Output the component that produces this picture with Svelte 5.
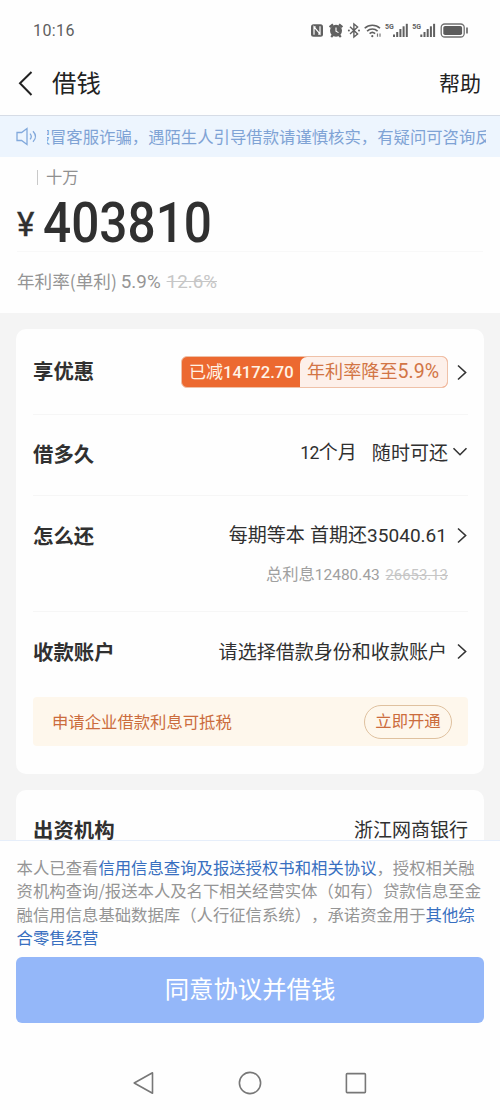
<script lang="ts">
  const amount = "403810";
  const notice = "冒客服诈骗，遇陌生人引导借款请谨慎核实，有疑问可咨询反";
  const signals = [85, 112.3];
</script>

{#snippet arrow()}
  <svg class="arrow" width="12" height="18" viewBox="0 0 12 18">
    <path d="M2 2.5 9.6 9.5l-7.6 7" />
  </svg>
{/snippet}

<div class="screen">
  <!-- Status bar -->
  <div class="status">
    <span class="clock">10:16</span>
    <svg class="status-icons" width="170" height="20" viewBox="0 0 170 20">
      <!-- NFC -->
      <rect x="11" y="4.2" width="12" height="12.6" rx="2.5" fill="#606060" />
      <path d="M14 14.7V6.8l6 7V6.2M14 6.8h1.6M20 14.2h-1.8" fill="none" stroke="#fff" stroke-width="1.2" />
      <!-- Alarm -->
      <circle cx="36" cy="10.7" r="6" fill="#606060" />
      <path d="M29.6 7.2 33 4.3M42.4 7.2 39 4.3M31.2 17l1.8-2M40.8 17 39 15" stroke="#606060" stroke-width="2.2" />
      <path d="M36 7.5v3.6l2.5 1.5" fill="none" stroke="#fff" stroke-width="1.1" />
      <!-- Bluetooth -->
      <path d="M50 6.7l7.6 7.3-3.7 3V4l3.7 3L50 14.1" fill="none" stroke="#606060" stroke-width="1.4" />
      <circle cx="48.9" cy="10.4" r="1" fill="#606060" />
      <circle cx="59" cy="10.4" r="1" fill="#606060" />
      <!-- Wifi -->
      <g fill="none" stroke="#606060" stroke-width="1.6">
        <path d="M64.7 8.3a11 11 0 0 1 15.3 0" />
        <path d="M67.1 11.1a7.5 7.5 0 0 1 10.5 0" />
        <path d="M69.6 13.7a4 4 0 0 1 5.5 0" />
      </g>
      <circle cx="72.3" cy="16.2" r="1.1" fill="#606060" />
      <path d="M77.5 13.5v3.3M80 13.5v3.3" stroke="#777" stroke-width="1.2" />
      {#each signals as x}
        <text {x} y="8.5" class="net">5G</text>
        <g fill="#606060">
          <rect x={x + 8} y="14.5" width="2" height="2.5" />
          <rect x={x + 11.2} y="12" width="2" height="5" />
          <rect x={x + 14.4} y="9" width="2" height="8" />
          <rect x={x + 17.6} y="6.3" width="2" height="10.7" />
          <rect x={x + 20.8} y="3.8" width="2" height="13.2" />
        </g>
      {/each}
      <!-- Battery -->
      <rect x="141.2" y="4" width="23" height="13" rx="3.5" fill="none" stroke="#707070" stroke-width="1.3" />
      <rect x="143.3" y="6" width="18.8" height="9" rx="1.8" fill="#5c5c5c" />
      <path d="M167 7.5v6" stroke="#606060" stroke-width="1.6" />
    </svg>
  </div>

  <header class="header">
    <svg width="16" height="26" viewBox="0 0 16 26">
      <path d="M14.5 2 3 13.3 14.5 25" fill="none" stroke="#222" stroke-width="2" />
    </svg>
    <h1>借钱</h1>
    <span class="help">帮助</span>
  </header>

  <div class="notice">
    <svg width="24" height="20" viewBox="0 0 24 20">
      <g fill="none" stroke="#82a9dc" stroke-width="1.3">
        <path d="M1 6.5h4.6L11 2.5v16l-5.4-4H1z" />
        <path d="M14 7.6q2.6 2.9 0 5.8M17 5.2q5 5.3 0 10.6" />
      </g>
    </svg>
    <div class="notice-text"><span class="cut">假</span>{notice}</div>
  </div>

  <section class="amount">
    <div class="unit">十万</div>
    <div class="money">
      <span class="yen">¥</span><span class="digits">{amount}</span>
    </div>
    <div class="rate">年利率(单利) <span class="num">5.9%</span> <s class="num">12.6%</s></div>
  </section>

  <main>
    <div class="card">
      <div class="row discount">
        <b>享优惠</b>
        <div class="value">
          <div class="coupon">
            <span class="cut-off">已减<span class="num">14172.70</span></span>
            <span class="rate-to">年利率降至<span class="num">5.9%</span></span>
          </div>
          {@render arrow()}
        </div>
      </div>

      <div class="row period">
        <b>借多久</b>
        <div class="value">
          <span><span class="num">12</span>个月</span>
          <span class="anytime">随时可还</span>
          <svg class="down" width="16" height="10" viewBox="0 0 16 10">
            <path d="M1.5 1.2 8 7.7l6.5-6.5" />
          </svg>
        </div>
      </div>

      <div class="row repay">
        <div class="line">
          <b>怎么还</b>
          <div class="value">
            <span>每期等本 首期还<span class="num">35040.61</span></span>
            {@render arrow()}
          </div>
        </div>
        <div class="interest">
          总利息<span class="num">12480.43</span> <s class="num">26653.13</s>
        </div>
      </div>

      <div class="row account">
        <b>收款账户</b>
        <div class="value">
          <span>请选择借款身份和收款账户</span>
          {@render arrow()}
        </div>
      </div>

      <div class="tax">
        <span>申请企业借款利息可抵税</span>
        <button>立即开通</button>
      </div>
    </div>

    <div class="card lender">
      <b>出资机构</b>
      <span>浙江网商银行</span>
    </div>
  </main>

  <footer>
    <p>
      本人已查看<a href="#terms">信用信息查询及报送授权书和相关协议</a>，授权相关融<br />
      资机构查询/报送本人及名下相关经营实体（如有）贷款信息至金<br />
      融信用信息基础数据库（人行征信系统），承诺资金用于<a href="#usage">其他综</a><br />
      <a href="#usage">合零售经营</a>
    </p>
    <button class="submit">同意协议并借钱</button>
  </footer>

  <!-- System navigation -->
  <nav>
    <svg width="24" height="26" viewBox="0 0 24 26"><path d="M20.5 2.8v20.4L2.2 13z" /></svg>
    <svg width="24" height="26" viewBox="0 0 24 26"><circle cx="12" cy="13" r="10.6" /></svg>
    <svg width="24" height="26" viewBox="0 0 24 26"><rect x="2.4" y="3.6" width="19" height="19" rx="0.8" /></svg>
  </nav>
</div>

<style>
  :global(body) {
    margin: 0;
    background: #fefefe;
  }

  .screen {
    display: flex;
    flex-direction: column;
    width: 500px;
    height: 1110px;
    overflow: hidden;
    background: #fefefe;
    color: #303030;
    font-family: "Noto Sans CJK SC", sans-serif;
    text-spacing-trim: space-all;
    white-space: nowrap;
  }

  .num {
    font-family: Roboto, "Noto Sans CJK SC", sans-serif;
  }

  .status {
    display: flex;
    flex: none;
    align-items: center;
    justify-content: space-between;
    height: 60px;
    padding: 0 30px 0 33px;
  }

  .clock {
    padding-top: 2px;
    color: #5e5e5e;
    font: 16px/20px Roboto, sans-serif;
    letter-spacing: 0.4px;
  }

  .net {
    fill: #606060;
    font: bold 7px Roboto, sans-serif;
  }

  .header {
    display: flex;
    flex: none;
    align-items: center;
    height: 45px;
    padding: 0 19px 10px 17px;
    border-bottom: 1px solid #d6dce6;
  }

  h1 {
    margin: 0 auto 0 19px;
    padding-bottom: 2px;
    font-size: 24.4px;
    font-weight: 400;
    line-height: 30px;
    color: #222;
  }

  .help {
    padding-bottom: 2px;
    color: #222;
    font-size: 21px;
    line-height: 30px;
  }

  .notice {
    display: flex;
    flex: none;
    align-items: center;
    box-sizing: border-box;
    height: 41px;
    padding: 0 14px 2px 16px;
    background: #edf5fe;
    color: #7fa3d5;
    font-size: 16.37px;
  }

  .notice svg {
    flex: none;
    margin-right: 7px;
  }

  .notice-text {
    display: flex;
    overflow: hidden;
    line-height: 24px;
  }

  /* scrolling text, first glyph is almost out of view */
  .cut {
    display: flex;
    flex: none;
    justify-content: flex-end;
    width: 3px;
    overflow: hidden;
  }

  .amount {
    flex: none;
    box-sizing: border-box;
    height: 156px;
    padding: 9px 17px 0;
  }

  .unit {
    width: 60px;
    margin: 4px 0 0 20px;
    padding-left: 8px;
    border-left: 1px solid #c9c9c9;
    color: #909090;
    font-size: 16.3px;
    line-height: 13px;
    height: 15px;
  }

  .money {
    display: flex;
    box-sizing: border-box;
    height: 67px;
    border-bottom: 1px solid #f8f8f8;
  }

  .yen {
    width: 26px;
    padding-top: 20px;
    font: 400 33px/40px Roboto, sans-serif;
    -webkit-text-stroke: 0.4px #303030;
  }

  .digits {
    padding-top: 8px;
    font: 500 56px/60px Roboto, sans-serif;
    transform: scaleX(0.885);
    transform-origin: left;
  }

  .rate {
    margin-top: 17px;
    color: #959595;
    font-size: 17.6px;
    line-height: 24px;
  }

  .rate .num {
    font-size: 18.8px;
  }

  .rate s {
    margin-left: 2px;
  }

  s {
    color: #c6c6c6;
  }

  main {
    display: flex;
    flex: none;
    flex-direction: column;
    gap: 16px;
    box-sizing: border-box;
    height: 527px;
    padding: 16px 16px 0;
    overflow: hidden;
    background: #f4f4f4;
  }

  .card {
    flex: none;
    box-sizing: border-box;
    padding: 0 16px 0 17px;
    border-radius: 10px;
    background: #fefefe;
  }

  .card:first-child {
    height: 445px;
  }

  b {
    font-size: 20.4px;
    line-height: 28px;
  }

  .row {
    display: flex;
    justify-content: space-between;
    align-items: center;
    box-sizing: border-box;
    border-bottom: 1px solid #f6f6f6;
  }

  .discount {
    height: 86px;
  }

  .discount b,
  .period b,
  .account b {
    padding-bottom: 3px;
  }

  .period {
    height: 81px;
    padding-bottom: 2px;
  }

  .period .value {
    padding-bottom: 4px;
  }

  .period .num {
    font-size: 17.6px;
    letter-spacing: -0.6px;
  }

  .repay {
    flex-direction: column;
    align-items: stretch;
    justify-content: flex-start;
    height: 116px;
    padding-top: 24px;
  }

  .repay b {
    margin-top: -1px;
  }

  .account {
    height: 80px;
    border: 0;
  }

  .account .value {
    padding-bottom: 2px;
  }

  .line,
  .value {
    display: flex;
    align-items: center;
  }

  .line {
    justify-content: space-between;
  }

  .value {
    font-size: 19.05px;
    line-height: 28px;
  }

  .line .value {
    word-spacing: 1px;
  }

  .arrow {
    margin-left: 8px;
  }

  .line .arrow,
  .account .arrow {
    margin-left: 9px;
  }

  .arrow path,
  .down path {
    fill: none;
    stroke: #333;
    stroke-width: 1.6;
  }

  .anytime {
    margin-left: 15px;
  }

  .down {
    margin-left: 4px;
  }

  .coupon {
    display: flex;
    box-sizing: border-box;
    width: 267px;
    height: 32px;
    border: 1px solid #efc1a8;
    border-radius: 6px;
    background: #ec6930;
    line-height: 27px;
    overflow: hidden;
  }

  .cut-off {
    width: 118px;
    box-sizing: border-box;
    padding-left: 7px;
    color: #fff3e6;
    font-size: 17px;
  }

  .cut-off .num {
    font-size: 16.6px;
    font-weight: 500;
  }

  .rate-to {
    flex: 1;
    padding-left: 7px;
    border-radius: 7px 0 0 0;
    background: #fdf0ea;
    color: #d27545;
    font-size: 18.1px;
  }

  .rate-to .num {
    font-size: 19.6px;
  }

  .interest {
    margin: 10px 20px 0 0;
    color: #a0a0a0;
    font-size: 16.3px;
    line-height: 26px;
    text-align: right;
  }

  .interest .num {
    font-size: 15.5px;
  }

  .interest s.num {
    margin-left: 2px;
    font-size: 14.9px;
  }

  .tax {
    display: flex;
    align-items: center;
    justify-content: space-between;
    box-sizing: border-box;
    height: 49px;
    margin-top: 5px;
    padding: 0 16px 0 19px;
    border-radius: 4px;
    background: #fef7ec;
    color: #cb6c3d;
    font-size: 16.35px;
  }

  .tax span {
    padding-bottom: 2px;
  }

  .tax button {
    width: 88px;
    height: 34px;
    padding: 0 0 3px;
    border: 1px solid #dfc19f;
    border-radius: 17px;
    background: none;
    color: inherit;
    font: inherit;
    line-height: 28px;
  }

  .lender {
    display: flex;
    justify-content: space-between;
    height: 90px;
    padding-top: 25px;
    font-size: 19px;
    line-height: 28px;
  }

  footer {
    position: relative;
    box-sizing: border-box;
    height: 182px;
    padding: 15px 16px 0;
    border-top: 1px solid #e6eefa;
    background: #fefefe;
  }

  p {
    margin: 0 0 8px 0.6px;
    color: #959595;
    font-size: 16.37px;
    line-height: 23.3px;
  }

  a {
    color: #386fc0;
    text-decoration: none;
  }

  .submit {
    display: block;
    width: 468px;
    height: 66px;
    padding: 0 0 4px;
    border: 0;
    border-radius: 6px;
    background: #94b7f9;
    color: #fff;
    font: 24.4px/60px "Noto Sans CJK SC", sans-serif;
  }

  nav {
    display: flex;
    justify-content: center;
    gap: 82px;
    margin-top: 48px;
  }

  nav svg {
    fill: none;
    stroke: #777;
    stroke-width: 1.6;
    stroke-linejoin: round;
  }
</style>
